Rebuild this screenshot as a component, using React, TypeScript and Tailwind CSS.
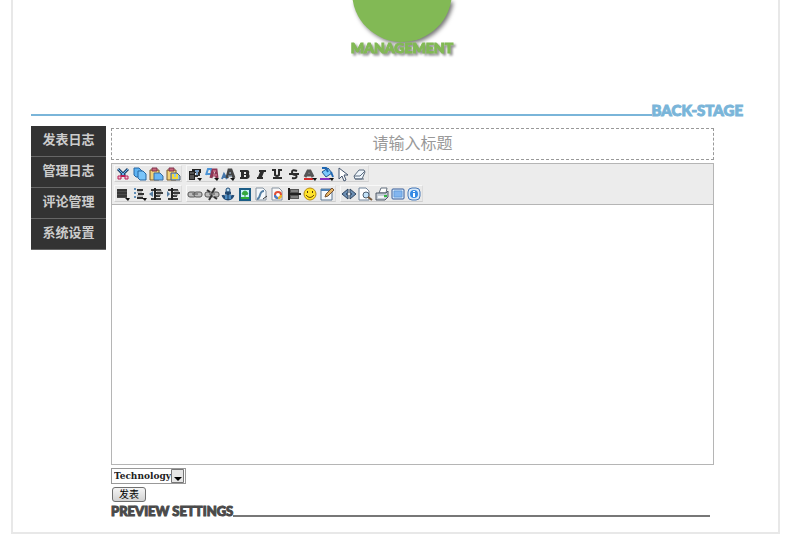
import type { ReactNode } from 'react';

type Tool = { name: string; art: ReactNode };

const ink = '#2b2b2b';

const pasteBase = (
  <>
    <path d="M2 4h9v10H2z" fill="#f1d27a" stroke="#7d5a28" />
    <path d="M4 2h5v3H4z" fill="#c9677e" stroke="#7e3048" />
  </>
);

const cornerArrow = <path d="M10 12h5l-2 3z" fill="#111" />;

const clipboardTools: Tool[] = [
  {
    name: 'Cut',
    art: (
      <>
        <path d="M3 3l7 7M13 3l-7 7" stroke="#24466e" strokeWidth="3" />
        <path d="M3 3l6 6M13 3L7 9" stroke="#69b5ee" strokeWidth="1" />
        <path d="M3 10h3v3H3zM10 10h3v3h-3z" fill="#f3c3d4" stroke="#b92058" strokeWidth="1" />
        <path d="M6 9h4v2H6z" fill="#b92058" />
      </>
    ),
  },
  {
    name: 'Copy',
    art: (
      <>
        <path d="M2 2h5l3 3v6H4L2 9z" fill="#5db3f3" stroke="#2766a3" />
        <path d="M6 5h5l3 3v6H8l-2-2z" fill="#79c4fa" stroke="#2766a3" />
      </>
    ),
  },
  {
    name: 'Paste',
    art: (
      <>
        {pasteBase}
        <path d="M6 7h6l3 3v4H6z" fill="#69b7f5" stroke="#3b6c9e" />
      </>
    ),
  },
  {
    name: 'Paste as text',
    art: (
      <>
        {pasteBase}
        <path d="M6 7h6l3 3v4H6z" fill="#8fc5ea" stroke="#52616e" />
        <path d="M8 8v4h4V8" fill="none" stroke="#f4da38" strokeWidth="2" />
      </>
    ),
  },
];

const textTools: Tool[] = [
  {
    name: 'Paragraph',
    art: (
      <>
        <path d="M2 5h6v9H2zM5 3h9v4H5z" fill="#222" />
        <path d="M3 7h4M3 10h4M3 12h4" stroke="#8a8a8a" />
        <path d="M8 5h4M10 6v4" stroke="#789cc2" strokeWidth="2" />
        <path d="M12 6v4M8 10h3" stroke="#333" strokeWidth="2" />
        {cornerArrow}
      </>
    ),
  },
  {
    name: 'Font family',
    art: (
      <>
        <path d="M2 9l2-6h3l1 8M3 8h4" fill="none" stroke="#4c94d6" strokeWidth="2" />
        <path d="M7 12l2-8h3l1 8M8 9h4" fill="none" stroke="#8d3655" strokeWidth="3" />
        <path d="M9 5h3M9 9h4" stroke="#e78ca5" />
        {cornerArrow}
      </>
    ),
  },
  {
    name: 'Font size',
    art: (
      <>
        <path d="M2 13l2-5 3 5M3 11h4" fill="none" stroke="#4778ac" strokeWidth="2" />
        <path d="M7 12l2-8h2l3 8M8 9h5" fill="none" stroke="#444" strokeWidth="3" />
        <path d="M9 7h2M8 10h4" stroke="#8aa5c0" />
        {cornerArrow}
      </>
    ),
  },
  {
    name: 'Bold',
    art: (
      <path d="M3 4h7q3 0 2 4 2 4-2 5H3v-2h1V6H3zM7 6v2h2V6zM7 9v2h2V9z" fill={ink} fillRule="evenodd" />
    ),
  },
  {
    name: 'Italic',
    art: <path d="M6 4h7v2h-2l-2 5h1v2H4v-2h1l2-5H6z" fill={ink} />,
  },
  {
    name: 'Underline',
    art: (
      <>
        <path d="M3 4h4M9 4h4M4 12h9" stroke={ink} strokeWidth="2" />
        <path d="M6 4v5q2 2 4 0V4" fill="none" stroke={ink} strokeWidth="2" />
      </>
    ),
  },
  {
    name: 'Strikethrough',
    art: (
      <>
        <path d="M11 5Q6 3 6 6t4 3q2 4-4 3" fill="none" stroke={ink} strokeWidth="2" />
        <path d="M3 8h10" stroke={ink} strokeWidth="2" />
      </>
    ),
  },
  {
    name: 'Text colour',
    art: (
      <>
        <path d="M3 11l3-6h2l3 6M5 9h5" fill="none" stroke="#555" strokeWidth="3" />
        <path d="M2 12h9v2H2z" fill="#d32a2a" />
        {cornerArrow}
      </>
    ),
  },
  {
    name: 'Background colour',
    art: (
      <>
        <path d="M3 6l6-4 4 5-6 4z" fill="#7cc8fb" stroke="#20558f" />
        <path d="M3 2h4l2 4M12 6l2 5" fill="none" stroke="#2068b3" strokeWidth="2" />
        <path d="M1 12h10v2H1z" fill="#8930c1" />
        {cornerArrow}
      </>
    ),
  },
  {
    name: 'Select all',
    art: <path d="M4 2v11l3-3 2 5 2-1-2-5h4z" fill="#fff" stroke="#43546d" />,
  },
  {
    name: 'Remove format',
    art: (
      <>
        <path d="M2 10l5-6h5l1 2-3 7H3z" fill="#eef5fb" stroke="#5b6b7e" />
        <path d="M2 10h6l5-5M3 13h9" fill="none" stroke="#5b6b7e" />
      </>
    ),
  },
];

const indentLines = (
  <>
    <path d="M3 4h10M6 7h9M6 10h6M3 13h10" stroke="#3b3b3b" strokeWidth="2" />
    <path d="M7 2v12" stroke="#222" strokeWidth="2" />
    <path d="M9 5h5M9 9h4" stroke="#777" />
  </>
);

const listTools: Tool[] = [
  {
    name: 'Align',
    art: (
      <>
        <path d="M2 3h10v9H2z" fill="#4c4c4c" />
        <path d="M2 4h10M2 7h10M2 10h10" stroke="#222" />
        {cornerArrow}
      </>
    ),
  },
  {
    name: 'List',
    art: (
      <>
        <path d="M2 2h2v2H2zM2 6h2v2H2zM2 10h2v2H2z" fill="#5f8db7" />
        <path d="M5 4h6M6 8h6M5 12h6" stroke="#333" strokeWidth="2" />
        <path d="M5 6h5M5 10h6" stroke="#888" />
        {cornerArrow}
      </>
    ),
  },
  {
    name: 'Outdent',
    art: (
      <>
        {indentLines}
        <path d="M1 8l4-3v6z" fill="#567da2" />
      </>
    ),
  },
  {
    name: 'Indent',
    art: (
      <>
        {indentLines}
        <path d="M5 8L2 5v6z" fill="#567da2" />
      </>
    ),
  },
];

const linkShape = (
  <>
    <rect x="1" y="6" width="8" height="5" rx="2" fill="#bbb" stroke="#555" />
    <rect x="7" y="6" width="8" height="5" rx="2" fill="#bbb" stroke="#555" />
    <path d="M5 8h6" stroke="#555" />
  </>
);

const insertTools: Tool[] = [
  { name: 'Link', art: linkShape },
  {
    name: 'Unlink',
    art: (
      <>
        {linkShape}
        <path d="M11 2l-3 5M5 14l3-5M3 4l3 2M13 13l-3-2" stroke="#333" strokeWidth="2" />
      </>
    ),
  },
  {
    name: 'Anchor',
    art: (
      <>
        <path d="M8 5v8M5 7h6M3 9q1 4 5 4t5-4" fill="none" stroke="#234c76" strokeWidth="3" />
        <path d="M5 9h6v4H5z" fill="#4e8dc3" />
        <circle cx="8" cy="4" r="2" fill="#b8dcf3" stroke="#234c76" />
        <path d="M8 6v8" stroke="#183c62" />
      </>
    ),
  },
  {
    name: 'Image',
    art: (
      <>
        <path d="M3 3h10v11H3z" fill="#c8f1fa" stroke="#1d5e87" strokeWidth="2" />
        <path d="M4 11h8v2H4z" fill="#2cae37" />
        <path d="M5 8q1-3 3-3t3 3q-3 2-6 0M8 8v4" fill="#36a83f" stroke="#36a83f" />
      </>
    ),
  },
  {
    name: 'Flash',
    art: (
      <>
        <path d="M3 2h7l3 3v9H3z" fill="#f5f9fc" stroke="#8794a1" />
        <path d="M11 5Q8 5 7 9t-3 4" fill="none" stroke="#5580a5" strokeWidth="2" />
        <path d="M10 13l4-3" stroke="#333" />
      </>
    ),
  },
  {
    name: 'Media',
    art: (
      <>
        <path d="M3 2h7l3 3v9H3z" fill="#f8f8f8" stroke="#8794a1" />
        <circle cx="9" cy="9" r="3" fill="#fff" stroke="#e04d35" strokeWidth="2" />
        <path d="M6 9a3 3 0 003 3" fill="none" stroke="#3e7fd0" strokeWidth="2" />
        <path d="M9 12a3 3 0 003-3" fill="none" stroke="#e7b928" strokeWidth="2" />
      </>
    ),
  },
  {
    name: 'Page break',
    art: (
      <>
        <path d="M3 3h10v4H3zM3 9h10v4H3z" fill="#555" />
        <path d="M2 8h13M3 2v12" stroke="#222" strokeWidth="2" />
        <path d="M5 5h7M5 11h7" stroke="#aaa" />
      </>
    ),
  },
  {
    name: 'Emoticon',
    art: (
      <>
        <circle cx="8" cy="8" r="6" fill="#ffe329" stroke="#b88c16" />
        <path d="M5 5h1v2H5zM10 5h1v2h-1z" fill="#553a06" />
        <path d="M4 9q4 5 8 0" fill="none" stroke="#684709" />
      </>
    ),
  },
  {
    name: 'Edit block',
    art: (
      <>
        <path d="M2 3h11v11H2z" fill="#f5faff" stroke="#5c7691" />
        <path d="M2 3h11v2H2z" fill="#4c80b5" />
        <path d="M6 11l1-3 6-6 2 2-6 6z" fill="#e4b667" stroke="#775133" />
      </>
    ),
  },
];

const viewTools: Tool[] = [
  {
    name: 'Source',
    art: (
      <>
        <path d="M7 3L1 8l6 5V9L5 8l2-1z" fill="#6d90b5" stroke="#304661" />
        <path d="M9 3l6 5-6 5V9l2-1-2-1z" fill="#6d90b5" stroke="#304661" />
      </>
    ),
  },
  {
    name: 'Preview',
    art: (
      <>
        <path d="M2 2h7l3 3v9H2z" fill="#fff" stroke="#71849a" />
        <circle cx="9" cy="9" r="3" fill="#c3e2f8" stroke="#4c5d70" />
        <path d="M11 11l4 3" stroke="#795b3d" strokeWidth="2" />
      </>
    ),
  },
  {
    name: 'Print',
    art: (
      <>
        <path d="M5 7l2-5h6l-1 5z" fill="#fff" stroke="#65717f" />
        <path d="M2 7h10l2-2v6l-3 3H2z" fill="#c5cdd6" stroke="#505b69" />
        <path d="M4 10h6v2H4z" fill="#f5f6f7" />
        <path d="M10 9h3v2h-3z" fill="#32b743" />
      </>
    ),
  },
  {
    name: 'Full screen',
    art: (
      <>
        <rect x="2" y="3" width="12" height="10" rx="1" fill="#d6e8fa" stroke="#345b98" />
        <path d="M4 5h8v6H4z" fill="#82b5ef" stroke="#659ddb" />
      </>
    ),
  },
  {
    name: 'About',
    art: (
      <>
        <rect x="2" y="2" width="12" height="12" rx="4" fill="#d8eafb" stroke="#4778b8" />
        <circle cx="8" cy="8" r="4" fill="#348ae5" />
        <path d="M8 5v1M8 7v4" stroke="#fff" strokeWidth="2" />
      </>
    ),
  },
];

function ToolGroup({ tools, width }: { tools: Tool[]; width: string }) {
  return (
    <div className={`flex h-[17px] border border-t-[#f8f8f8] border-l-[#f8f8f8] border-r-[#dcdcdc] border-b-[#cfcfcf] bg-[#e9e9e9] ${width}`}>
      {tools.map((tool) => (
        <button key={tool.name} type="button" aria-label={tool.name} className="flex min-w-0 flex-1 items-center justify-center">
          <svg viewBox="0 0 16 16" className="size-4 shrink-0">
            {tool.art}
          </svg>
        </button>
      ))}
    </div>
  );
}

const navItems = ['发表日志', '管理日志', '评论管理', '系统设置'];

export default function App() {
  return (
    <div className="bg-white pb-2 font-['Liberation_Sans','Noto_Sans_CJK_SC',sans-serif]">
      <div className="mr-[14px] ml-[11px] border-2 border-t-0 border-[#e8e8e8] pr-[35px] pb-[13px] pl-[18px]">
        <header className="flex h-[102px] flex-col items-center pl-[30px]">
          <svg viewBox="0 0 112 44" className="h-11 w-28 shrink-0 drop-shadow-[2px_2px_2px_rgba(0,0,0,0.55)]">
            <circle cx="56" cy="-8" r="50" fill="#82b955" />
          </svg>
          <h1 className="-mt-1 font-[Lato,sans-serif] text-[14px] leading-4 font-black text-[#82b955] drop-shadow-[2px_2px_1px_rgba(0,0,0,0.45)] [-webkit-text-stroke:1px_#82b955]">
            MANAGEMENT
          </h1>
        </header>

        <div className="flex items-end text-[#7ab5d9]">
          <div className="mb-[2px] h-[2px] flex-1 bg-[#7ab5d9]" />
          <h2 className="font-[Lato,sans-serif] text-[15px] leading-4 font-black [-webkit-text-stroke:1px_#7ab5d9]">BACK-STAGE</h2>
        </div>

        <div className="mt-2 flex items-start gap-[5px]">
          <nav className="w-[75px] shrink-0 bg-[#333]">
            {navItems.map((item) => (
              <a key={item} href="#" className="block h-[31px] border-b border-[#666] text-center text-[13px] leading-[27px] font-bold text-[#ccc]">
                {item}
              </a>
            ))}
          </nav>

          <main className="mt-[2px] mr-[29px] min-w-0 flex-1">
            <form>
              <input
                aria-label="标题"
                placeholder="请输入标题"
                className="block h-8 w-full border border-dashed border-[#999] text-center text-base text-[#999] outline-none placeholder:text-[#999] placeholder:opacity-100"
              />
              <div className="mt-[3px] border border-[#b5b5b5]">
                <div className="flex flex-col gap-[3px] border-b border-[#b5b5b5] bg-[#ececec] px-[2px] pt-px pb-[2px]">
                  <div className="flex gap-1">
                    <ToolGroup tools={clipboardTools} width="w-[68px]" />
                    <ToolGroup tools={textTools} width="w-[183px]" />
                  </div>
                  <div className="flex gap-1">
                    <ToolGroup tools={listTools} width="w-[68px]" />
                    <ToolGroup tools={insertTools} width="w-[150px]" />
                    <ToolGroup tools={viewTools} width="w-[83px]" />
                  </div>
                </div>
                <textarea aria-label="正文" className="block h-[259px] w-full resize-none outline-none" />
              </div>

              <div className="relative mt-[3px] h-4 w-[75px]">
                <select
                  aria-label="分类"
                  className="block h-4 w-full appearance-none border border-[#999] bg-white pr-[14px] pl-[2px] font-['DejaVu_Serif',serif] text-[9px] leading-3 font-bold text-[#222]"
                >
                  <option>Technology</option>
                </select>
                <svg viewBox="0 0 14 14" className="pointer-events-none absolute top-px right-px size-[14px]">
                  <path d="M.5.5h12v13H.5z" fill="#e6e6e6" stroke="#777" />
                  <path d="M3 8h8l-4 4z" fill="#000" />
                </svg>
              </div>
              <button
                type="button"
                className="mt-[3px] ml-px block h-[15px] w-[34px] rounded-[3px] border border-[#707070] bg-linear-to-b from-[#f5f5f5] to-[#d2d2d2] text-[10px] leading-3 text-black"
              >
                发表
              </button>
            </form>
            <div className="mt-px flex items-end text-[#4a4a4a]">
              <h2 className="font-[Lato,sans-serif] text-[13px] leading-4 font-black [-webkit-text-stroke:1px_#4a4a4a]">PREVIEW SETTINGS</h2>
              <div className="mr-1 mb-[2px] h-[2px] flex-1 bg-[#777]" />
            </div>
          </main>
        </div>
      </div>
    </div>
  );
}
